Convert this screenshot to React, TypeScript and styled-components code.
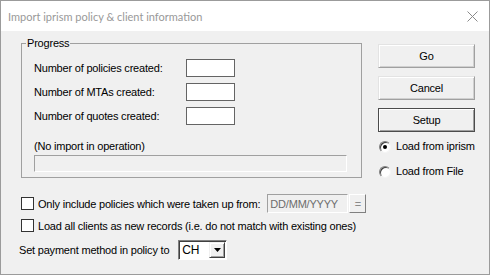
import { Fragment } from "react";
import { createGlobalStyle, styled } from "styled-components";

const GlobalStyle = createGlobalStyle`
  html, body {
    margin: 0;
    background: #ffffff;
  }
  * {
    box-sizing: border-box;
  }
`;

const Window = styled.div`
  width: 490px;
  height: 275px;
  border: 1px solid #9b9b9b;
  display: flex;
  flex-direction: column;
  font-family: "Liberation Sans", Arial, sans-serif;
  font-size: 11px;
  letter-spacing: -0.2px;
  color: #000;
`;

const TitleBar = styled.div`
  height: 30px;
  background: #fff;
  display: flex;
  align-items: center;
  justify-content: space-between;
  padding: 0 11px 0 7px;
`;

const Title = styled.span`
  font-family: Lato, "Noto Sans", sans-serif;
  font-size: 11px;
  letter-spacing: 0;
  color: #999;
`;

const Body = styled.div`
  flex: 1;
  background: #f0f0f0;
  padding: 6px 13px 0 20px;
  display: flex;
  flex-direction: column;
`;

const TopRow = styled.div`
  display: flex;
  gap: 16px;
`;

const GroupBox = styled.fieldset`
  width: 341px;
  margin: 0;
  padding: 9px 12px 5px 12px;
  border: 1px solid #a0a0a0;
  display: flex;
  flex-direction: column;
`;

const Legend = styled.legend`
  padding: 0 1px;
  margin-left: -8px;
  line-height: 13px;
`;

const CountGrid = styled.div`
  display: grid;
  grid-template-columns: 152px 49px;
  row-gap: 6px;
  align-items: center;
`;

const CountBox = styled.div`
  width: 49px;
  height: 18px;
  background: #fff;
  border: 1px solid #646464;
`;

const Status = styled.div`
  margin-top: 15px;
  line-height: 13px;
`;

const ProgressBar = styled.div`
  margin-top: 2px;
  width: 313px;
  height: 17px;
  background: #f0f0f0;
  border: 1px solid;
  border-color: #a0a0a0 #fff #fff #a0a0a0;
`;

const SideColumn = styled.div`
  width: 97px;
  padding-top: 7px;
  display: flex;
  flex-direction: column;
  gap: 8px;
`;

const Button = styled.button<{ $default?: boolean }>`
  width: 97px;
  height: 24px;
  padding: 0;
  font: inherit;
  letter-spacing: -0.2px;
  color: #000;
  background: #f0f0f0;
  border: 1px solid;
  border-color: ${(p) => (p.$default ? "#4c4c4c" : "#e3e3e3 #a0a0a0 #a0a0a0 #e3e3e3")};
  box-shadow: ${(p) =>
    p.$default
      ? "inset 1px 1px #fff, inset -1px -1px #a0a0a0"
      : "inset 1px 1px #fff, inset -1px -1px #d0d0d0"};
`;

const RadioGroup = styled.div`
  display: flex;
  flex-direction: column;
  gap: 12px;
`;

const RadioRow = styled.label`
  display: flex;
  align-items: center;
  gap: 5px;
  height: 13px;
  line-height: 13px;
`;

const RadioDot = styled.span<{ $checked?: boolean }>`
  width: 12px;
  height: 12px;
  border-radius: 50%;
  background: #fff;
  border: 1px solid;
  border-color: #808080 #f4f4f4 #f4f4f4 #808080;
  box-shadow: inset 1px 1px #404040;
  display: flex;
  align-items: center;
  justify-content: center;
  margin-left: 1px;

  &::after {
    content: "";
    width: 4px;
    height: 4px;
    border-radius: 50%;
    background: ${(p) => (p.$checked ? "#000" : "transparent")};
  }
`;

const Options = styled.div`
  margin-top: 16px;
  display: flex;
  flex-direction: column;
`;

const OptionRow = styled.div<{ $gap?: number; $indent?: number }>`
  display: flex;
  align-items: center;
  margin-top: ${(p) => p.$gap ?? 0}px;
  margin-left: ${(p) => p.$indent ?? 0}px;
`;

const CheckBox = styled.span`
  width: 13px;
  height: 13px;
  background: #fff;
  border: 1px solid #333;
  margin-right: 4px;
  flex-shrink: 0;
`;

const Label = styled.span<{ $space?: number }>`
  margin-right: ${(p) => p.$space ?? 0}px;
  white-space: nowrap;
`;

const DateField = styled.div`
  width: 81px;
  height: 19px;
  padding-left: 2px;
  display: flex;
  align-items: center;
  color: #6d6d6d;
  background: #f0f0f0;
  border: 1px solid;
  border-color: #a0a0a0 #fff #fff #a0a0a0;
`;

const PickerButton = styled.div`
  width: 17px;
  height: 19px;
  margin-left: 1px;
  display: flex;
  align-items: center;
  justify-content: center;
  color: #8a8a8a;
  background: #f0f0f0;
  border: 1px solid;
  border-color: #fff #808080 #808080 #fff;
`;

const Combo = styled.div`
  width: 49px;
  height: 20px;
  display: flex;
  align-items: center;
  background: #fff;
  border: 1px solid;
  border-color: #808080 #fff #fff #808080;
  box-shadow: inset 1px 1px #404040;
  padding: 1px 1px 1px 2px;
`;

const ComboText = styled.span`
  flex: 1;
  padding-left: 1px;
  font-size: 12px;
`;

const ComboArrow = styled.span`
  width: 16px;
  height: 16px;
  background: #f0f0f0;
  border: 1px solid;
  border-color: #f0f0f0 #404040 #404040 #f0f0f0;
  box-shadow: inset 1px 1px #fff, inset -1px -1px #a0a0a0;
  display: flex;
  align-items: center;
  justify-content: center;
`;

const counts = [
  "Number of policies created:",
  "Number of MTAs created:",
  "Number of quotes created:",
];

export default function App() {
  return (
    <>
      <GlobalStyle />
      <Window>
        <TitleBar>
          <Title>Import iprism policy &amp; client information</Title>
          <svg width="11" height="11" viewBox="0 0 11 11">
            <path d="M0.5 0.5 L10.5 10.5 M10.5 0.5 L0.5 10.5" stroke="#8a8a8a" strokeWidth="1" />
          </svg>
        </TitleBar>
        <Body>
          <TopRow>
            <GroupBox>
              <Legend>Progress</Legend>
              <CountGrid>
                {counts.map((c) => (
                  <Fragment key={c}>
                    <span>{c}</span>
                    <CountBox />
                  </Fragment>
                ))}
              </CountGrid>
              <Status>(No import in operation)</Status>
              <ProgressBar />
            </GroupBox>
            <SideColumn>
              <Button>Go</Button>
              <Button>Cancel</Button>
              <Button $default>Setup</Button>
              <RadioGroup>
                <RadioRow>
                  <RadioDot $checked />
                  Load from iprism
                </RadioRow>
                <RadioRow>
                  <RadioDot />
                  Load from File
                </RadioRow>
              </RadioGroup>
            </SideColumn>
          </TopRow>
          <Options>
            <OptionRow>
              <CheckBox />
              <Label $space={7}>Only include policies which were taken up from:</Label>
              <DateField>DD/MM/YYYY</DateField>
              <PickerButton>=</PickerButton>
            </OptionRow>
            <OptionRow $gap={6}>
              <CheckBox />
              <Label>Load all clients as new records (i.e. do not match with existing ones)</Label>
            </OptionRow>
            <OptionRow $gap={8} $indent={-2}>
              <Label $space={9}>Set payment method in policy to</Label>
              <Combo>
                <ComboText>CH</ComboText>
                <ComboArrow>
                  <svg width="7" height="4" viewBox="0 0 7 4">
                    <path d="M0 0 H7 L3.5 4 Z" fill="#000" />
                  </svg>
                </ComboArrow>
              </Combo>
            </OptionRow>
          </Options>
        </Body>
      </Window>
    </>
  );
}
